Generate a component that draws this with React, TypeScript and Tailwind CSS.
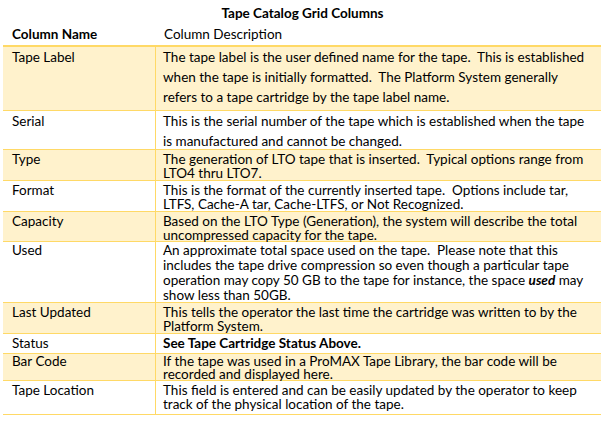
const rows: {
  name: string;
  lines: React.ReactNode[];
  shaded: boolean;
  h: string;
  lh: string;
  pt: string;
}[] = [
  {
    name: "Tape Label",
    shaded: true,
    h: "h-[64px]",
    lh: "leading-[20px]",
    pt: "pt-0",
    lines: [
      "The tape label is the user defined name for the tape.  This is established",
      "when the tape is initially formatted.  The Platform System generally",
      "refers to a tape cartridge by the tape label name.",
    ],
  },
  {
    name: "Serial",
    shaded: false,
    h: "h-[39px]",
    lh: "leading-[20px]",
    pt: "pt-0",
    lines: [
      "This is the serial number of the tape which is established when the tape",
      "is manufactured and cannot be changed.",
    ],
  },
  {
    name: "Type",
    shaded: true,
    h: "h-[31px]",
    lh: "leading-[14px]",
    pt: "pt-[2px]",
    lines: [
      "The generation of LTO tape that is inserted.  Typical options range from",
      "LTO4 thru LTO7.",
    ],
  },
  {
    name: "Format",
    shaded: false,
    h: "h-[31px]",
    lh: "leading-[14px]",
    pt: "pt-[2px]",
    lines: [
      "This is the format of the currently inserted tape.  Options include tar,",
      "LTFS, Cache-A tar, Cache-LTFS, or Not Recognized.",
    ],
  },
  {
    name: "Capacity",
    shaded: true,
    h: "h-[30px]",
    lh: "leading-[14px]",
    pt: "pt-[2px]",
    lines: [
      "Based on the LTO Type (Generation), the system will describe the total",
      "uncompressed capacity for the tape.",
    ],
  },
  {
    name: "Used",
    shaded: false,
    h: "h-[61px]",
    lh: "leading-[15px]",
    pt: "pt-[1px]",
    lines: [
      "An approximate total space used on the tape.  Please note that this",
      "includes the tape drive compression so even though a particular tape",
      <>
        operation may copy 50 GB to the tape for instance, the space{" "}
        <b className="italic">used</b> may
      </>,
      "show less than 50GB.",
    ],
  },
  {
    name: "Last Updated",
    shaded: true,
    h: "h-[31px]",
    lh: "leading-[14px]",
    pt: "pt-[2px]",
    lines: [
      "This tells the operator the last time the cartridge was written to by the",
      "Platform System.",
    ],
  },
  {
    name: "Status",
    shaded: false,
    h: "h-[20px]",
    lh: "leading-[15px]",
    pt: "pt-[2px]",
    lines: [<b>See Tape Cartridge Status Above.</b>],
  },
  {
    name: "Bar Code",
    shaded: true,
    h: "h-[27px]",
    lh: "leading-[13px]",
    pt: "pt-[1px]",
    lines: [
      "If the tape was used in a ProMAX Tape Library, the bar code will be",
      "recorded and displayed here.",
    ],
  },
  {
    name: "Tape Location",
    shaded: false,
    h: "h-[34px]",
    lh: "leading-[14px]",
    pt: "pt-[2px]",
    lines: [
      "This field is entered and can be easily updated by the operator to keep",
      "track of the physical location of the tape.",
    ],
  },
];

export default function App() {
  return (
    <div className="w-[603px] h-[431px] bg-white text-black font-['Lato','Open_Sans',sans-serif] text-[13.5px] overflow-hidden">
      {/* title */}
      <div className="pt-[5px] h-[22px] text-center font-bold leading-[17px] pl-[2px]">
        Tape Catalog Grid Columns
      </div>

      <div className="ml-[3px] w-[598px]">
        {/* header */}
        <div className="grid grid-cols-[153px_1fr] h-[25px] border-b-2 border-[#ffd966]">
          <div className="pl-[9px] pt-[4px] font-bold leading-[17px]">Column Name</div>
          <div className="pl-[8px] pt-[4px] leading-[17px]">Column Description</div>
        </div>

        {rows.map((r) => (
          <div
            key={r.name}
            className={`grid grid-cols-[153px_1fr] border-b border-[#ffd966] ${r.h} ${r.lh} ${
              r.shaded ? "bg-[#fff2cc]" : "bg-white"
            }`}
          >
            <div className={`pl-[9px] ${r.pt} border-r border-[#ffd966] whitespace-nowrap`}>
              {r.name}
            </div>
            <div className={`pl-[7px] ${r.pt} whitespace-pre`}>
              {r.lines.map((l, i) => (
                <div key={i}>{l}</div>
              ))}
            </div>
          </div>
        ))}
      </div>
    </div>
  );
}
